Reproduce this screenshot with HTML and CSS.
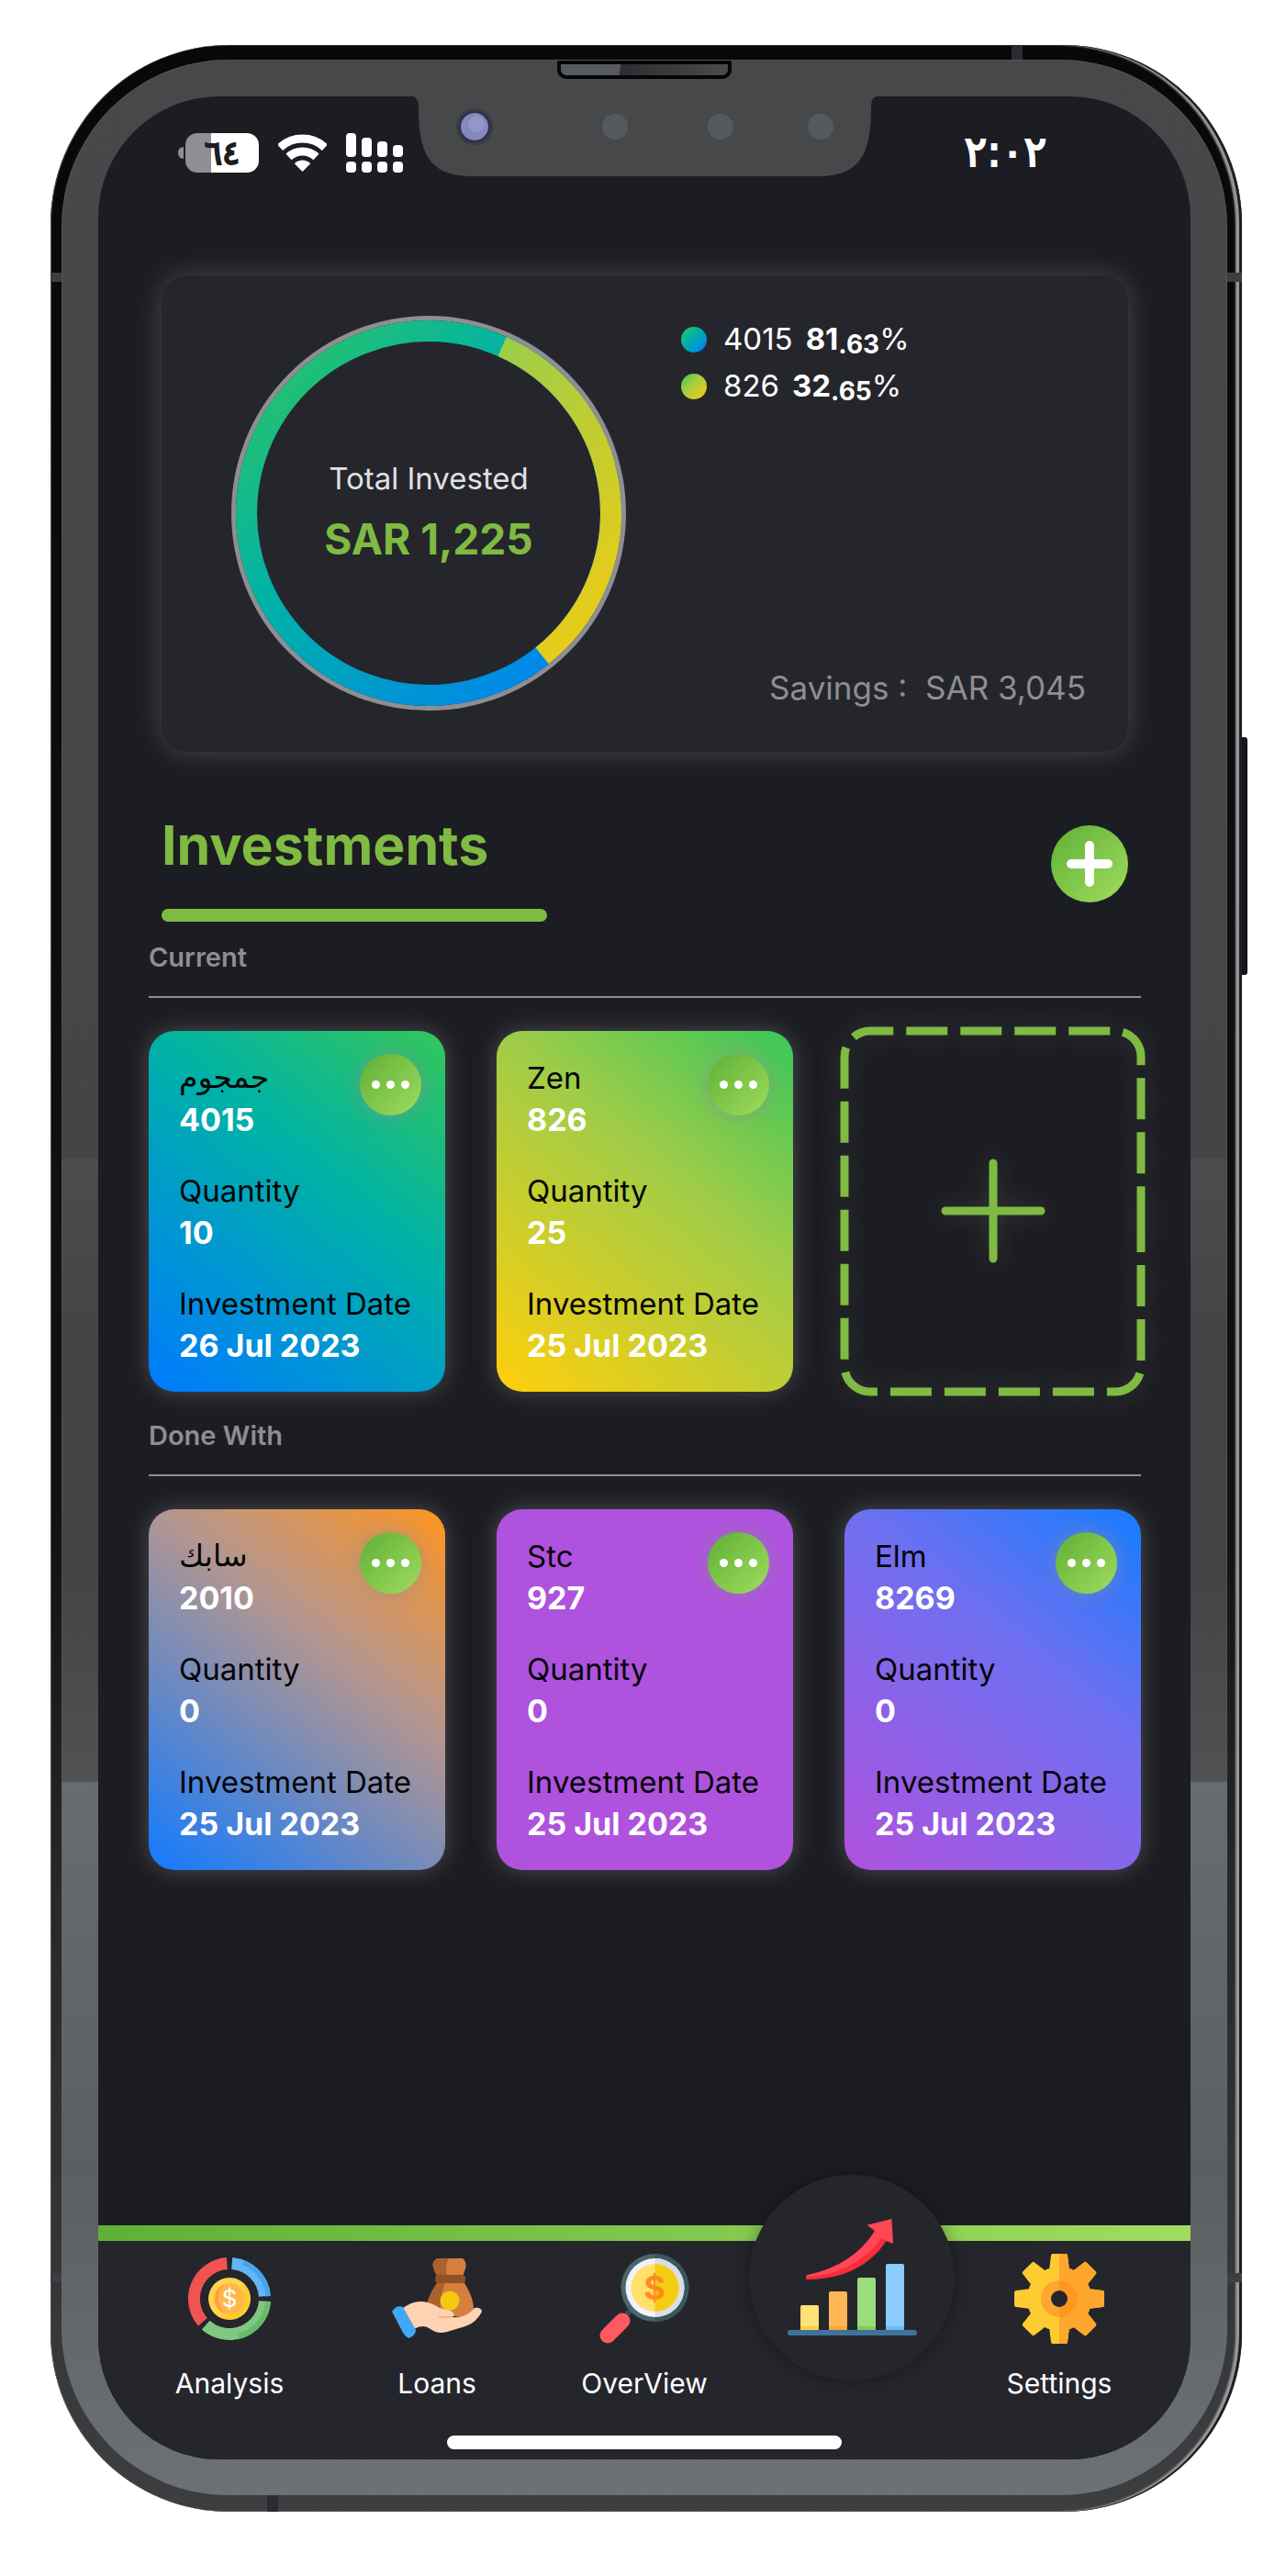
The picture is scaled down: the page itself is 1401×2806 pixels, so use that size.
FILE: index.html
```html
<!DOCTYPE html>
<html lang="en">
<head>
<meta charset="utf-8">
<meta name="viewport" content="width=device-width, initial-scale=1">
<title>Investments</title>
<link rel="stylesheet" href="styles.css">
</head>
<body>
<div class="phone">
  <span class="power-key"></span>
  <span class="band band-top"></span>
  <span class="band band-bottom"></span>
  <span class="band band-side band-upper"></span>
  <span class="band band-side band-lower"></span>
  <div class="bezel">
    <span class="speaker"></span>
    <div class="screen">
      <header class="status">
        <div class="status-icons">
          <span class="battery"><span class="battery-level">٦٤</span></span>
          <svg class="wifi" viewBox="0 0 53 41" aria-hidden="true">
            <g fill="none" stroke="#fff" stroke-width="9">
              <path d="M2 14.7A36 36 0 0 1 51 14.7"/>
              <path d="M11.5 24.9A22 22 0 0 1 41.500 24.9"/>
            </g>
            <path d="M26.500 41L17.800 32.200A12 12 0 0 1 35.200 32.200Z" fill="#fff"/>
          </svg>
          <svg class="signal" viewBox="0 0 62 43" aria-hidden="true" fill="#fff">
            <rect x="0" y="0" width="11" height="26" rx="4"/>
            <rect x="17" y="5" width="11" height="21" rx="4"/>
            <rect x="34" y="9" width="11" height="17" rx="4"/>
            <rect x="51" y="13" width="11" height="13" rx="4"/>
            <rect x="0" y="31" width="11" height="12" rx="4"/>
            <rect x="17" y="31" width="11" height="12" rx="4"/>
            <rect x="34" y="31" width="11" height="12" rx="4"/>
            <rect x="51" y="31" width="11" height="12" rx="4"/>
          </svg>
        </div>
        <svg class="notch" viewBox="0 0 513 88" aria-hidden="true">
          <path d="M0 -1C8 0 10 4 10 12C10 60 20 87 68 87H445C493 87 503 60 503 12C503 4 505 0 513 -1Z" fill="#47484a"/>
          <circle cx="71" cy="33" r="20" fill="#3b3c40"/>
          <circle cx="71" cy="33" r="17" fill="#2e2d55"/>
          <circle cx="71" cy="33" r="15" fill="#8488bb"/>
          <circle cx="73" cy="30" r="9" fill="#9396c8"/>
          <circle cx="224" cy="33" r="14" fill="#545a5e"/>
          <circle cx="339" cy="33" r="14" fill="#545a5e"/>
          <circle cx="448" cy="33" r="14" fill="#545a5e"/>
        </svg>
        <time class="clock">٢:٠٢</time>
      </header>

      <main class="content">
        <section class="summary">
          <div class="ring">
            <svg class="ring-chart" viewBox="0 0 430 430" aria-hidden="true">
              <defs>
                <linearGradient id="ocean" gradientUnits="userSpaceOnUse" x1="5" y1="5" x2="425" y2="425">
                  <stop offset="0" stop-color="#34c759"/>
                  <stop offset=".4" stop-color="#00b2a6"/>
                  <stop offset="1" stop-color="#007aff"/>
                </linearGradient>
                <linearGradient id="lime" gradientUnits="userSpaceOnUse" x1="5" y1="5" x2="425" y2="425">
                  <stop offset="0" stop-color="#34c759"/>
                  <stop offset=".4" stop-color="#a0cd46"/>
                  <stop offset="1" stop-color="#ffcc0a"/>
                </linearGradient>
              </defs>
              <circle cx="215" cy="215" r="212.500" fill="none" stroke="#8e8e93" stroke-width="5"/>
              <circle cx="215" cy="215" r="198.500" fill="none" stroke="url(#ocean)" stroke-width="23"/>
              <path d="M295.1 33.400A198.500 198.500 0 0 1 338.600 370.300" fill="none" stroke="url(#lime)" stroke-width="23"/>
            </svg>
            <div class="ring-text">
              <span class="ring-label">Total Invested</span>
              <strong class="ring-value">SAR 1,225</strong>
            </div>
          </div>
          <div class="summary-side">
            <ul class="legend">
              <li><span class="dot dot-ocean"></span>4015 <span class="share"><b>81</b><b class="fraction">.63</b>%</span></li>
              <li><span class="dot dot-lime"></span>826 <span class="share"><b>32</b><b class="fraction">.65</b>%</span></li>
            </ul>
            <p class="savings">Savings :&nbsp; SAR 3,045</p>
          </div>
        </section>

        <div class="heading">
          <h1 class="heading-title">Investments</h1>
          <button class="add" type="button" aria-label="Add investment">
            <svg class="add-icon" viewBox="0 0 50 50" aria-hidden="true"><path d="M25 5V45M5 25H45" stroke="#fff" stroke-width="10" stroke-linecap="round"/></svg>
          </button>
        </div>

        <section class="group">
          <h2 class="group-title">Current</h2>
          <div class="cards">
            <article class="card card-ocean">
              <button class="more" type="button" aria-label="Options"><span></span><span></span><span></span></button>
              <dl>
                <div><dt lang="ar">جمجوم</dt><dd>4015</dd></div>
                <div><dt>Quantity</dt><dd>10</dd></div>
                <div><dt>Investment Date</dt><dd>26 Jul 2023</dd></div>
              </dl>
            </article>
            <article class="card card-lime">
              <button class="more" type="button" aria-label="Options"><span></span><span></span><span></span></button>
              <dl>
                <div><dt>Zen</dt><dd>826</dd></div>
                <div><dt>Quantity</dt><dd>25</dd></div>
                <div><dt>Investment Date</dt><dd>25 Jul 2023</dd></div>
              </dl>
            </article>
            <button class="card-new" type="button" aria-label="New investment">
              <svg class="card-new-frame" viewBox="0 0 323 393" preserveAspectRatio="none" aria-hidden="true" fill="none" stroke="#7fba43" stroke-width="9">
                <path stroke-dasharray="45 14" d="M323 196V365A28 28 0 0 1 295 393H28A28 28 0 0 1 0 365V28A28 28 0 0 1 28 0H295A28 28 0 0 1 323 28V196"/>
                <path stroke-linecap="round" d="M162 144V248M110 196H214"/>
              </svg>
            </button>
          </div>
        </section>

        <section class="group">
          <h2 class="group-title">Done With</h2>
          <div class="cards">
            <article class="card card-sunset">
              <button class="more" type="button" aria-label="Options"><span></span><span></span><span></span></button>
              <dl>
                <div><dt lang="ar">سابك</dt><dd>2010</dd></div>
                <div><dt>Quantity</dt><dd>0</dd></div>
                <div><dt>Investment Date</dt><dd>25 Jul 2023</dd></div>
              </dl>
            </article>
            <article class="card card-purple">
              <button class="more" type="button" aria-label="Options"><span></span><span></span><span></span></button>
              <dl>
                <div><dt>Stc</dt><dd>927</dd></div>
                <div><dt>Quantity</dt><dd>0</dd></div>
                <div><dt>Investment Date</dt><dd>25 Jul 2023</dd></div>
              </dl>
            </article>
            <article class="card card-violet">
              <button class="more" type="button" aria-label="Options"><span></span><span></span><span></span></button>
              <dl>
                <div><dt>Elm</dt><dd>8269</dd></div>
                <div><dt>Quantity</dt><dd>0</dd></div>
                <div><dt>Investment Date</dt><dd>25 Jul 2023</dd></div>
              </dl>
            </article>
          </div>
        </section>
      </main>

      <nav class="tabs">
        <div class="tabs-row">
          <a class="tab" href="#analysis">
            <svg class="tab-icon" viewBox="-4 -4 98 98" aria-hidden="true">
              <g fill="none" stroke-width="13">
                <path stroke="#f05352" d="M42.300 6.600A38.500 38.500 0 0 0 15.900 70.300"/>
                <path stroke="#64b5f6" d="M47.700 6.600A38.500 38.500 0 0 1 83.400 42.300"/>
                <path stroke="#81c784" d="M83.400 47.700A38.500 38.500 0 0 1 19.200 73.600"/>
                <path stroke="#42a5f5" stroke-width="5" d="M60 6A42 42 0 0 1 87 42.300"/>
                <path stroke="#66bb6a" stroke-width="6" d="M87 47.700A42 42 0 0 1 55 85.800"/>
              </g>
              <circle cx="45" cy="45" r="23" fill="#ffd54f"/>
              <path d="M60 28A23 23 0 0 1 32 64A28 28 0 0 0 60 28Z" fill="#ffca28"/>
              <circle cx="45" cy="45" r="17" fill="#ffb74d"/>
              <path d="M40 29A17 17 0 0 0 40 61A22 22 0 0 1 40 29Z" fill="#ffa030"/>
              <text x="45" y="54" text-anchor="middle" font-size="26" fill="#fff">$</text>
            </svg>
            <span>Analysis</span>
          </a>
          <a class="tab" href="#loans">
            <svg class="tab-icon" viewBox="0 -5 98 98" aria-hidden="true">
              <path d="M49 0H77Q83 5 79 14L77 20L79 27Q90 44 89 59Q84 66 74 64L38 58Q36 46 49 27V19Q42 6 46 3Z" fill="#d67f3e"/>
              <path d="M49 0H62Q57 8 60 20Q52 40 53 60L38 58Q36 46 49 27V19Q42 6 46 3Z" fill="#ab602d"/>
              <rect x="47" y="18" width="33" height="9" rx="4" fill="#8f5227"/>
              <circle cx="63" cy="46" r="10.500" fill="#f3c910"/>
              <path d="M11 55Q22 46 33 47Q43 48 52 54L64 57Q70 61 66 64Q80 66 90 54Q97 53 98 58Q92 70 80 74L60 80Q50 83 42 77Q34 71 24 77Z" fill="#fdd3b3"/>
              <path d="M51 64H66" fill="none" stroke="#efb48d" stroke-width="2"/>
              <path d="M0 58Q5 50 12 53L26 78Q26 84 18 87Q13 84 11 79Z" fill="#3fa9f5"/>
            </svg>
            <span>Loans</span>
          </a>
          <a class="tab" href="#overview">
            <svg class="tab-icon" viewBox="0 0 98 98" aria-hidden="true">
              <path d="M30 66L36 59" stroke="#2f4a50" stroke-width="6"/>
              <path d="M25 73L9 89" stroke="#ff5a5f" stroke-width="17" stroke-linecap="round"/>
              <circle cx="60.500" cy="37" r="37" fill="#4a666e"/>
              <path d="M60.500 0A37 37 0 0 1 60.500 74Z" fill="#3a575b"/>
              <circle cx="60.500" cy="37" r="32" fill="#f2f2fa"/>
              <path d="M60.500 5A32 32 0 0 1 60.500 69Z" fill="#dcdce6"/>
              <circle cx="60.500" cy="37" r="26" fill="#ffe06b"/>
              <path d="M60.500 11A26 26 0 0 1 60.500 63Z" fill="#f4cd12"/>
              <text x="60" y="50" text-anchor="middle" font-size="36" font-weight="700" fill="#ff8a1e">$</text>
            </svg>
            <span>OverView</span>
          </a>
          <a class="tab tab-active" href="#investments" aria-label="Investments" aria-current="page">
            <svg class="tab-chart" viewBox="0 0 141 128" aria-hidden="true">
              <path d="M20 63Q20 61 23 60.700Q72 50 95 13L86.400 6.700L113.400 0L115 27L107.500 24Q80 65 22 66Q20 66 20 63Z" fill="#ff4755"/>
              <path d="M20 63Q70 62 103 21L107.500 24Q80 65 22 66Q20 66 20 63Z" fill="#fc2b3a"/>
              <path d="M14 96q0-2 2-2h16q2 0 2 2v25H14z" fill="#ffe177"/>
              <path d="M45 81q0-2 2-2h16q2 0 2 2v40H45z" fill="#ffb655"/>
              <path d="M76 66q0-2 2-2h16q2 0 2 2v55H76z" fill="#9ade7c"/>
              <path d="M107 51q0-2 2-2h16q2 0 2 2v70h-20z" fill="#8cccff"/>
              <path d="M14 117h20v4H14z" fill="#f9d04a"/>
              <path d="M45 117h20v4H45z" fill="#ffa733"/>
              <path d="M76 117h20v4H76z" fill="#82cc62"/>
              <path d="M107 117h20v4h-20z" fill="#6cb9f5"/>
              <rect x="0" y="121" width="141" height="6" rx="3" fill="#40729b"/>
            </svg>
          </a>
          <a class="tab" href="#settings">
            <svg class="tab-icon" viewBox="0 0 98 98" aria-hidden="true">
              <defs>
                <clipPath id="right-half"><rect x="49" y="0" width="49" height="98"/></clipPath>
                <g id="gear">
                  <circle cx="49" cy="49" r="35"/>
                  <path id="teeth" d="M40 2Q40 0 42 0H56Q58 0 58 2L60 18H38ZM40 96Q40 98 42 98H56Q58 98 58 96L60 80H38ZM2 40Q0 40 0 42V56Q0 58 2 58L18 60V38ZM96 40Q98 40 98 42V56Q98 58 96 58L80 60V38Z"/>
                  <use href="#teeth" transform="rotate(45 49 49)"/>
                </g>
              </defs>
              <use href="#gear" fill="#ffcb32"/>
              <use href="#gear" fill="#ffa62e" clip-path="url(#right-half)"/>
              <circle cx="49" cy="49" r="20" fill="#ffa62e"/>
              <path d="M49 29A20 20 0 0 1 49 69Z" fill="#ff9820"/>
              <circle cx="49" cy="49" r="9" fill="#25262b"/>
            </svg>
            <span>Settings</span>
          </a>
        </div>
        <span class="home-bar"></span>
      </nav>
    </div>
  </div>
</div>
</body>
</html>
```
FILE: styles.css
```css
* {
  box-sizing: border-box;
}

body {
  display: flex;
  flex-direction: column;
  min-height: 100vh;
  margin: 0;
  padding: 49px 48px 70px 55px;
  background: #fff;
  color: #fff;
  font-family: Inter, "DejaVu Sans", sans-serif;
}

h1, h2, p, ul, dl, dd {
  margin: 0;
  padding: 0;
}

button {
  padding: 0;
  border: 0;
  background: none;
  cursor: pointer;
}

/* Device frame */
.phone {
  position: relative;
  flex: 1;
  display: flex;
  flex-direction: column;
  padding: 16px 16px 18px 12px;
  border-radius: 195px;
  background: linear-gradient(#080808 0%, #121214 60%, #26282a 75%, #3c3e40 100%);
  box-shadow: inset 1px 0 0 #55575a, inset -3px 0 0 #1c1e22, inset -7px 0 2px #98989c;
}

.power-key {
  position: absolute;
  top: 754px;
  left: 100%;
  width: 6px;
  height: 259px;
  border-radius: 0 3px 3px 0;
  background: #14161c;
}

.band {
  position: absolute;
  background: #2b2c32;
}

.band-top {
  top: 0;
  right: 239px;
  width: 12px;
  height: 16px;
}

.band-bottom {
  bottom: 0;
  left: 236px;
  width: 12px;
  height: 18px;
}

.band-side {
  right: 0;
  left: 0;
  height: 10px;
  background: #3c3e41;
}

.band-upper {
  top: 248px;
}

.band-lower {
  bottom: 250px;
}

.bezel {
  position: relative;
  flex: 1;
  display: flex;
  flex-direction: column;
  padding: 40px 40px 39px;
  border-radius: 182px;
  background: linear-gradient(#474849 0, #444547 1196px, #4b4c4e 1198px, #434446 1400px, #434446 1650px, #505153 1875px, #676c6f 1877px, #5b5f62 2300px, #6d7175 100%);
  box-shadow: inset 0 0 2px #6b6d70;
}

.speaker {
  position: absolute;
  top: 1px;
  left: 50%;
  width: 190px;
  height: 20px;
  margin-left: -95px;
  border: 4px solid #050506;
  border-radius: 2px 2px 10px 10px;
  background: linear-gradient(100deg, #585b5d 35%, #2c2d30 36%, #4a4b4d);
}

.screen {
  flex: 1;
  display: flex;
  flex-direction: column;
  overflow: hidden;
  border-radius: 132px;
  background: #1c1d22;
}

/* Status bar */
.status {
  display: grid;
  grid-template-columns: 1fr 513px 1fr;
  height: 88px;
}

.status-icons {
  display: flex;
  align-items: center;
  align-self: end;
  gap: 21px;
  height: 53px;
  padding-left: 95px;
}

.battery {
  position: relative;
  flex: none;
  width: 80px;
  height: 43px;
  border-radius: 13px;
  background: linear-gradient(90deg, #8e8e93 28px, #fff 28px);
  color: #1c1d22;
  font: 400 36px/43px "DejaVu Sans", sans-serif;
  text-align: center;
  -webkit-text-stroke: 2px;
}

.battery::before {
  content: "";
  position: absolute;
  top: 15px;
  right: 82px;
  width: 6px;
  height: 13px;
  border-radius: 6px 0 0 6px;
  background: #8e8e93;
}

.wifi {
  flex: none;
  width: 53px;
  height: 41px;
}

.signal {
  flex: none;
  width: 62px;
  height: 43px;
}

.notch {
  width: 513px;
  height: 88px;
}

.clock {
  align-self: end;
  padding-left: 92px;
  font: 400 46px/56px "DejaVu Sans", sans-serif;
  -webkit-text-stroke: 2px;
}

/* Summary card */
.content {
  flex: 1;
  padding: 107px 54px 60px 55px;
}

.summary {
  display: flex;
  gap: 60px;
  margin: 0 14px;
  padding: 44px 46px 45px 76px;
  border-radius: 28px;
  background: #25262b;
  box-shadow: 0 0 28px #47484c;
}

.ring {
  display: grid;
  flex: none;
  width: 430px;
  height: 430px;
}

.ring-chart,
.ring-text {
  grid-area: 1 / 1;
}

.ring-text {
  display: flex;
  flex-direction: column;
  align-items: center;
  justify-content: center;
  gap: 16px;
}

.ring-label {
  color: #e0e0e4;
  font-size: 33px;
  line-height: 40px;
}

.ring-value {
  color: #7fba43;
  font-size: 46px;
  font-weight: 700;
  line-height: 60px;
}

.summary-side {
  flex: 1;
  display: flex;
  flex-direction: column;
  justify-content: space-between;
}

.legend {
  list-style: none;
  font-size: 33px;
  line-height: 51px;
}

.legend li {
  display: flex;
  align-items: center;
}

.share {
  margin-left: 14px;
  font-size: 33px;
}

.fraction {
  font-size: 28px;
  line-height: 28px;
  vertical-align: -4px;
}

.dot {
  width: 28px;
  height: 28px;
  margin-right: 18px;
  border-radius: 50%;
}

.dot-ocean {
  background: linear-gradient(135deg, #34c759, #00b2a6 40%, #007aff);
}

.dot-lime {
  background: linear-gradient(135deg, #34c759, #a0cd46 40%, #ffcc0a);
}

.savings {
  color: #8e8e93;
  font-size: 35px;
  line-height: 50px;
  text-align: right;
}

/* Page heading */
.heading {
  display: flex;
  align-items: flex-start;
  justify-content: space-between;
  margin: 66px 14px 0;
}

.heading-title {
  width: 420px;
  color: #7fba43;
  font-size: 59px;
  font-weight: 700;
  line-height: 72px;
}

.heading-title::after {
  content: "";
  display: block;
  height: 14px;
  margin-top: 33px;
  border-radius: 7px;
  background: #7fba43;
}

.add {
  display: grid;
  place-items: center;
  width: 84px;
  height: 84px;
  margin-top: 14px;
  border-radius: 50%;
  background: linear-gradient(135deg, #5fb035, #a0dc5f);
}

.add-icon {
  width: 50px;
  height: 50px;
}

/* Investment groups */
.group {
  margin-top: 31px;
}

.heading + .group {
  margin-top: 22px;
}

.group-title {
  padding-bottom: 25px;
  border-bottom: 2px solid #8e8e93;
  color: #8e8e93;
  font-size: 29px;
  font-weight: 600;
  line-height: 34px;
}

.cards {
  display: grid;
  grid-template-columns: repeat(3, 1fr);
  gap: 56px;
  margin-top: 36px;
}

.card {
  position: relative;
  padding: 28px 20px 27px 33px;
  border-radius: 28px;
  box-shadow: 0 0 24px #4c4c52;
}

.card dl {
  display: flex;
  flex-direction: column;
  gap: 31px;
}

.card dt,
.card dd {
  font-size: 33px;
  line-height: 46px;
  white-space: nowrap;
}

.card dt {
  color: #050505;
}

.card dt[lang="ar"] {
  font-family: "DejaVu Sans", sans-serif;
}

.card dd {
  font-size: 34px;
  font-weight: 700;
}

.card-ocean {
  background: linear-gradient(39deg, #007aff, #00b2a6 60%, #34c759);
}

.card-lime {
  background: linear-gradient(39deg, #ffcf0a, #a0cc48 60%, #3ac75a);
}

.card-sunset {
  background: linear-gradient(39deg, #127aff, #b5968f 62%, #ff9520);
}

.card-purple {
  background: #af52de;
}

.card-violet {
  background: linear-gradient(39deg, #af52de, #706ff0 60%, #157dff);
}

.more {
  position: absolute;
  top: 25px;
  right: 26px;
  display: flex;
  align-items: center;
  justify-content: center;
  gap: 7px;
  width: 67px;
  height: 67px;
  border-radius: 50%;
  background: linear-gradient(135deg, #5fb035, #a0dc5f);
  box-shadow: 0 0 20px rgba(142, 142, 147, 0.6);
}

.more span {
  width: 9px;
  height: 9px;
  border-radius: 50%;
  background: #fff;
}

.card-new {
  display: flex;
  border-radius: 28px;
}

.card-new-frame {
  width: 100%;
  height: 393px;
  overflow: visible;
  filter: drop-shadow(0 0 12px rgba(150, 150, 150, 0.25));
}

/* Tab bar */
.tabs {
  display: flex;
  flex-direction: column;
  align-items: center;
  padding-bottom: 11px;
  background: #25262b;
}

.tabs::before {
  content: "";
  align-self: stretch;
  height: 17px;
  background: linear-gradient(90deg, #5fb035, #a0dc5f);
}

.tabs-row {
  display: grid;
  grid-template-columns: repeat(5, 1fr);
  align-self: stretch;
  padding: 14px 30px 39px;
}

.tab {
  display: flex;
  flex-direction: column;
  align-items: center;
  gap: 25px;
  color: #fff;
  font-size: 30px;
  line-height: 36px;
  text-decoration: none;
}

.tab-icon {
  width: 98px;
  height: 98px;
}

.tab-active {
  justify-content: center;
  justify-self: center;
  width: 224px;
  height: 224px;
  margin: -86px 0 -65px;
  border-radius: 50%;
  background: #25262b;
  box-shadow: 0 0 18px rgba(0, 0, 0, 0.35);
}

.tab-chart {
  width: 141px;
  height: 128px;
}

.home-bar {
  width: 430px;
  height: 15px;
  border-radius: 8px;
  background: #fff;
}
```
